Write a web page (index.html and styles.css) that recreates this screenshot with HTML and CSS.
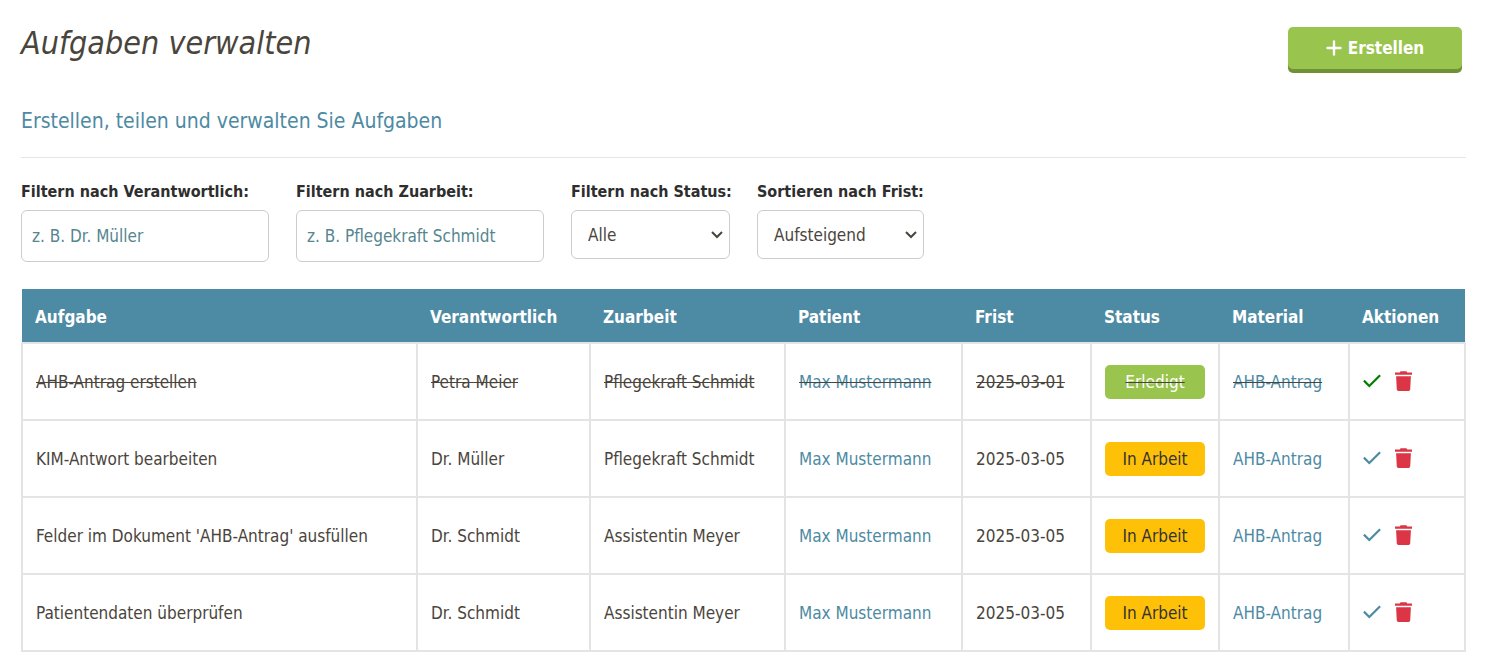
FILE: index.html
```
<!DOCTYPE html>
<html lang="de">
<head>
    <meta charset="UTF-8">
    <meta name="viewport" content="width=device-width, initial-scale=1.0">
    <title>Aufgaben verwalten</title>
    <link rel="stylesheet" href="styles.css">
</head>
<body>

    <!-- Icons -->
    <svg class="icon-defs" width="0" height="0" aria-hidden="true">
        <symbol id="icon-check" viewBox="0 0 18 14">
            <path d="M0.9 6.6 L6.3 12 L17.1 1.2" fill="none" stroke="currentColor" stroke-width="2.2"/>
        </symbol>
        <symbol id="icon-trash" viewBox="0 0 17 20">
            <path d="M0 1.4 H4.8 L5.6 0.3 H11.4 L12.2 1.4 H17 V3.8 H0 Z M1.1 5.2 H15.9 L15.2 18.6 Q15 20 13.6 20 H3.4 Q2 20 1.8 18.6 Z" fill="currentColor"/>
        </symbol>
    </svg>

    <!-- Header -->
    <header class="page-header">
        <div>
            <h1>Aufgaben verwalten</h1>
            <p class="subtitle">Erstellen, teilen und verwalten Sie Aufgaben</p>
        </div>
        <button type="button" class="btn-create">
            <svg width="16" height="16" viewBox="0 0 16 16" aria-hidden="true">
                <path d="M8 1.5 V14.5 M1.5 8 H14.5" stroke="currentColor" stroke-width="2.4" stroke-linecap="round"/>
            </svg>
            Erstellen
        </button>
    </header>

    <main>
        <!-- Filter -->
        <form class="filters">
            <div class="filter filter-text">
                <label for="filterVerantwortlich">Filtern nach Verantwortlich:</label>
                <input type="text" id="filterVerantwortlich" placeholder="z. B. Dr. Müller">
            </div>
            <div class="filter filter-text">
                <label for="filterZuarbeit">Filtern nach Zuarbeit:</label>
                <input type="text" id="filterZuarbeit" placeholder="z. B. Pflegekraft Schmidt">
            </div>
            <div class="filter filter-status">
                <label for="filterStatus">Filtern nach Status:</label>
                <select id="filterStatus">
                    <option>Alle</option>
                    <option>In Arbeit</option>
                    <option>Erledigt</option>
                </select>
            </div>
            <div class="filter filter-sort">
                <label for="sortFrist">Sortieren nach Frist:</label>
                <select id="sortFrist">
                    <option>Aufsteigend</option>
                    <option>Absteigend</option>
                </select>
            </div>
        </form>

        <!-- Aufgaben -->
        <table class="tasks">
            <colgroup>
                <col>
                <col class="col-responsible">
                <col class="col-support">
                <col class="col-patient">
                <col class="col-due">
                <col class="col-status">
                <col class="col-material">
                <col class="col-actions">
            </colgroup>
            <thead>
                <tr>
                    <th>Aufgabe</th>
                    <th>Verantwortlich</th>
                    <th>Zuarbeit</th>
                    <th>Patient</th>
                    <th>Frist</th>
                    <th>Status</th>
                    <th>Material</th>
                    <th>Aktionen</th>
                </tr>
            </thead>
            <tbody>
                <tr class="done">
                    <td>AHB-Antrag erstellen</td>
                    <td>Petra Meier</td>
                    <td>Pflegekraft Schmidt</td>
                    <td><a href="#">Max Mustermann</a></td>
                    <td>2025-03-01</td>
                    <td><span class="badge badge-done">Erledigt</span></td>
                    <td><a href="#">AHB-Antrag</a></td>
                    <td>
                        <div class="actions">
                            <button type="button" class="btn-check" aria-label="Wieder öffnen"><svg width="18" height="14"><use href="#icon-check"/></svg></button>
                            <button type="button" class="btn-delete" aria-label="Löschen"><svg width="17" height="20"><use href="#icon-trash"/></svg></button>
                        </div>
                    </td>
                </tr>
                <tr>
                    <td>KIM-Antwort bearbeiten</td>
                    <td>Dr. Müller</td>
                    <td>Pflegekraft Schmidt</td>
                    <td><a href="#">Max Mustermann</a></td>
                    <td>2025-03-05</td>
                    <td><span class="badge badge-progress">In Arbeit</span></td>
                    <td><a href="#">AHB-Antrag</a></td>
                    <td>
                        <div class="actions">
                            <button type="button" class="btn-check" aria-label="Erledigen"><svg width="18" height="14"><use href="#icon-check"/></svg></button>
                            <button type="button" class="btn-delete" aria-label="Löschen"><svg width="17" height="20"><use href="#icon-trash"/></svg></button>
                        </div>
                    </td>
                </tr>
                <tr>
                    <td>Felder im Dokument 'AHB-Antrag' ausfüllen</td>
                    <td>Dr. Schmidt</td>
                    <td>Assistentin Meyer</td>
                    <td><a href="#">Max Mustermann</a></td>
                    <td>2025-03-05</td>
                    <td><span class="badge badge-progress">In Arbeit</span></td>
                    <td><a href="#">AHB-Antrag</a></td>
                    <td>
                        <div class="actions">
                            <button type="button" class="btn-check" aria-label="Erledigen"><svg width="18" height="14"><use href="#icon-check"/></svg></button>
                            <button type="button" class="btn-delete" aria-label="Löschen"><svg width="17" height="20"><use href="#icon-trash"/></svg></button>
                        </div>
                    </td>
                </tr>
                <tr>
                    <td>Patientendaten überprüfen</td>
                    <td>Dr. Schmidt</td>
                    <td>Assistentin Meyer</td>
                    <td><a href="#">Max Mustermann</a></td>
                    <td>2025-03-05</td>
                    <td><span class="badge badge-progress">In Arbeit</span></td>
                    <td><a href="#">AHB-Antrag</a></td>
                    <td>
                        <div class="actions">
                            <button type="button" class="btn-check" aria-label="Erledigen"><svg width="18" height="14"><use href="#icon-check"/></svg></button>
                            <button type="button" class="btn-delete" aria-label="Löschen"><svg width="17" height="20"><use href="#icon-trash"/></svg></button>
                        </div>
                    </td>
                </tr>
            </tbody>
        </table>
    </main>

</body>
</html>
```
FILE: styles.css
```
/* Global Styles */
* {
    box-sizing: border-box;
}

body {
    margin: 0;
    padding: 22px 34px 0 21px;
    font-family: Tahoma, "DejaVu Sans Condensed", "Noto Sans", sans-serif;
    font-size: 17px;
    line-height: 24px;
    background-color: #ffffff;
    color: #4a453c;
}

button, input, select {
    font-family: inherit;
}

a {
    color: #4d8aa3;
    text-decoration: none;
}

.icon-defs {
    display: none;
}

/* Header */
.page-header {
    display: flex;
    justify-content: space-between;
    align-items: flex-start;
    padding-bottom: 22px;
    border-bottom: 1px solid #e4e4e4;
}

.page-header h1 {
    margin: 0 0 42px;
    font-size: 32px;
    font-weight: normal;
    font-style: italic;
    line-height: 43px;
}

.subtitle {
    margin: 0;
    font-size: 21px;
    line-height: 28px;
    color: #4d8aa3;
}

.btn-create {
    display: flex;
    justify-content: center;
    align-items: center;
    gap: 6px;
    width: 174px;
    height: 42px;
    margin: 5px 4px 0 0;
    border: none;
    border-radius: 5px;
    background-color: #99c44d;
    box-shadow: 0 4px 0 #709234;
    color: #ffffff;
    font-size: 17px;
    font-weight: bold;
    cursor: pointer;
}

/* Filter */
.filters {
    display: flex;
    align-items: flex-start;
    gap: 27px;
    padding: 22px 0 27px;
}

.filter {
    display: flex;
    flex-direction: column;
    gap: 6px;
}

.filter-text { width: 248px; }
.filter-status { width: 159px; }
.filter-sort { width: 167px; }

.filter label {
    font-size: 16px;
    font-weight: bold;
    color: #2e2e2e;
    white-space: nowrap;
}

.filter input {
    height: 52px;
    padding: 0 10px;
    border: 1px solid #cccccc;
    border-radius: 6px;
    font-size: 17px;
}

.filter input::placeholder {
    color: #55868f;
}

.filter select {
    appearance: none;
    height: 49px;
    padding: 0 28px 0 16px;
    border: 1px solid #cccccc;
    border-radius: 6px;
    background: #ffffff url("data:image/svg+xml,%3Csvg xmlns='http://www.w3.org/2000/svg' width='12' height='8'%3E%3Cpath d='M1 1 L6 6 L11 1' fill='none' stroke='%234a453c' stroke-width='2'/%3E%3C/svg%3E") no-repeat right 6px center;
    color: #4a453c;
    font-size: 17px;
}

/* Table */
.tasks {
    width: 100%;
    table-layout: fixed;
    border-collapse: collapse;
}

.col-responsible { width: 173px; }
.col-support { width: 195px; }
.col-patient { width: 177px; }
.col-due { width: 129px; }
.col-status { width: 128px; }
.col-material { width: 130px; }
.col-actions { width: 116px; }

.tasks th {
    height: 54px;
    padding: 2px 13px 0;
    background-color: #4d8aa3;
    color: #ffffff;
    text-align: left;
}

.tasks td {
    height: 77px;
    padding: 0 13px;
    border: 2px solid #e4e4e4;
    white-space: nowrap;
}

.done td {
    text-decoration: line-through;
}

/* Status */
.badge {
    display: block;
    border-radius: 5px;
    line-height: 34px;
    text-align: center;
}

.badge-done {
    background-color: #99c44d;
    color: #ffffff;
}

.badge-progress {
    background-color: #ffc107;
    color: #333333;
}

/* Actions */
.actions {
    display: flex;
    align-items: center;
    gap: 14px;
    padding-bottom: 2px;
}

.actions button {
    display: flex;
    padding: 0;
    border: none;
    background: none;
    cursor: pointer;
}

.btn-check {
    color: #4d8aa3;
}

.done .btn-check {
    color: #008000;
}

.btn-delete {
    color: #dc3545;
}
```
